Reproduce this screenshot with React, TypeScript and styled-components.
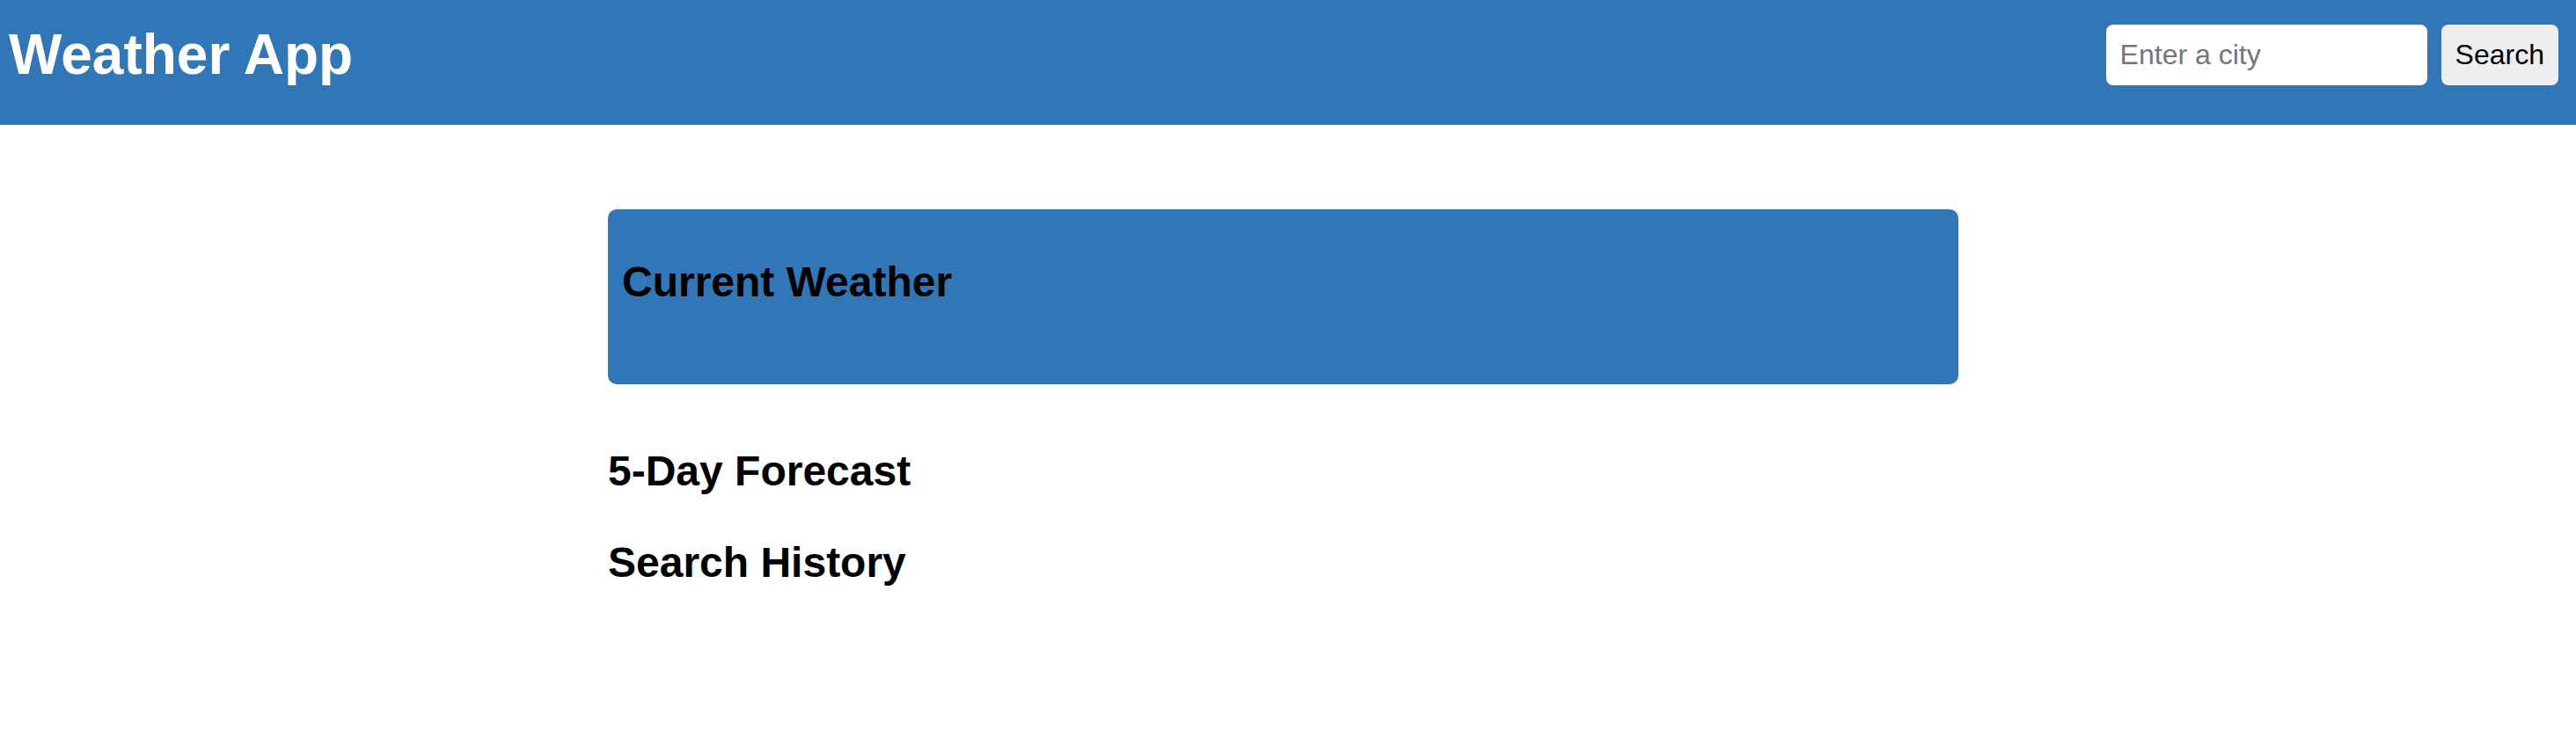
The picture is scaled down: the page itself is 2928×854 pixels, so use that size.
import React from "react";
import styled, { createGlobalStyle } from "styled-components";

const GlobalStyle = createGlobalStyle`
  html, body {
    margin: 0;
    padding: 0;
    background: #ffffff;
    font-family: "Liberation Sans", Arial, sans-serif;
  }
  * { box-sizing: border-box; }
`;

const BLUE = "#3177b7";

const Header = styled.header`
  display: flex;
  align-items: center;
  justify-content: space-between;
  height: 142px;
  padding: 0 20px 18px 10px;
  background: ${BLUE};
`;

const Title = styled.h1`
  margin: 0;
  font-size: 64px;
  font-weight: 700;
  color: #ffffff;
  line-height: normal;
`;

const SearchForm = styled.form`
  display: flex;
  align-items: center;
  gap: 16px;
`;

const CityInput = styled.input`
  width: 365px;
  height: 69px;
  padding: 0 16px;
  border: none;
  border-radius: 8px;
  background: #ffffff;
  font-family: "Liberation Sans", Arial, sans-serif;
  font-size: 32px;
  color: #000;
  outline: none;
  &::placeholder { color: #757575; }
`;

const SearchButton = styled.button`
  height: 69px;
  padding: 0 16px;
  border: none;
  border-radius: 8px;
  background: #ededed;
  font-family: "Liberation Sans", Arial, sans-serif;
  font-size: 32px;
  color: #000;
  cursor: pointer;
`;

const Main = styled.main`
  display: flex;
  flex-direction: column;
  width: 1535px;
  margin: 96px 0 0 691px;
`;

const WeatherCard = styled.section`
  height: 199px;
  padding: 16px 16px;
  border-radius: 10px;
  background: ${BLUE};
`;

const Heading = styled.h2<{ $top?: number }>`
  margin: ${(p) => p.$top ?? 0}px 0 0 0;
  font-size: 48px;
  font-weight: 700;
  color: #000;
  line-height: normal;
`;

export default function App() {
  return (
    <>
      <GlobalStyle />
      <Header>
        <Title>Weather App</Title>
        <SearchForm onSubmit={(e) => e.preventDefault()}>
          <CityInput type="text" placeholder="Enter a city" />
          <SearchButton type="submit">Search</SearchButton>
        </SearchForm>
      </Header>
      <Main>
        <WeatherCard>
          <Heading $top={39}>Current Weather</Heading>
        </WeatherCard>
        <Heading $top={71}>5-Day Forecast</Heading>
        <Heading $top={49}>Search History</Heading>
      </Main>
    </>
  );
}
